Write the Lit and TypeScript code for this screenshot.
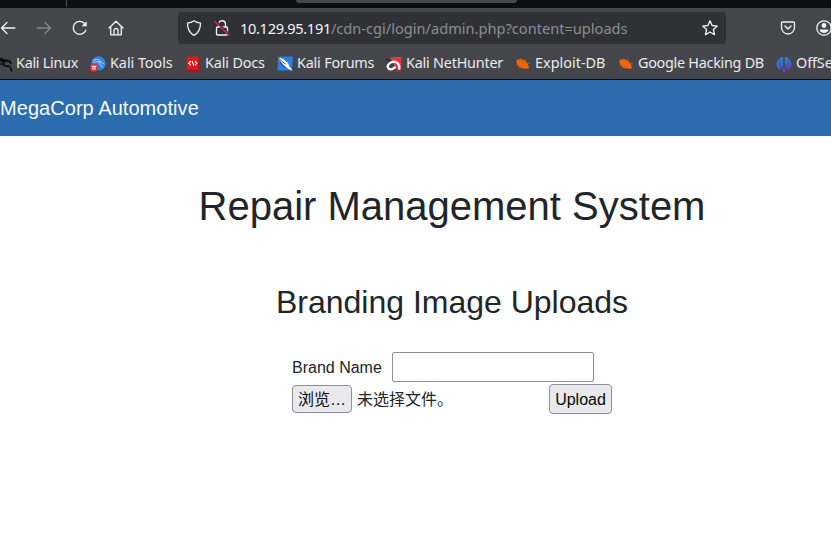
import { LitElement, html, css, svg } from "lit";
import { customElement } from "lit/decorators.js";
import { styleMap } from "lit/directives/style-map.js";

const icon = (body: unknown, size = 16) =>
  html`<svg class="icon" width=${size} height=${size} viewBox="0 0 16 16" fill="none" stroke="currentColor" stroke-width="1.3" stroke-linecap="round" stroke-linejoin="round">${body}</svg>`;

const dragon = svg`<path d="M2 2.500C5 2.500 8 3.500 10 5.500M3 5C5 4.200 7 5 8 6.500M6 4.500C10 3.500 13 4 15 7M8 6.500C7 9.500 9 10.500 12 10C14 10 15 12 15.500 15M4 8L7 8" stroke="#0b0b0e" stroke-width="1.700"/>`;
const tools = svg`<circle cx="8.500" cy="7.500" r="7.200" fill="#347fe8" stroke="none"/><path d="M3 4.500C6 3 9 3 11 5.500M3.500 6.500C6 5 10 5.500 14 8M9 6C9 8.500 11 9.500 13 11" stroke="#b9dcff" stroke-width="1"/><rect x="0" y="7.800" width="8" height="8" rx="3.800" fill="#d93237" stroke="none"/><path d="M2 10.300H6M3 10.500V13.500M5 10.500V13.500" stroke="#fff" stroke-width="1"/>`;
const docs = svg`<path d="M1.800 .5H13L14.500 2V15.500H1.800Z" fill="#e0171e" stroke="none"/><path d="M1.800 14H14.500V15.500H1.800ZM13.500 1V15H14.500V2Z" fill="#961018" stroke="none"/><path d="M5.500 5.500L3.700 7.200L5.500 8.900M10.300 5.500L12.100 7.200L10.300 8.900M7.200 5.200L8.700 9.200" stroke="#fff" stroke-width="1.100"/>`;
const forums = svg`<path d="M3.500 .5H16L15 14.500H.5L1 4Z" fill="#287fe8" stroke="none"/><path d="M.2 .5L6 3L11 7L12.500 10.500L15.800 14.800L11.500 13L8 10.500L4 6Z" fill="#fff" stroke="none"/><path d="M.5 .5L5 5.500L8.500 8M3 5.500L5 9L8.500 11" stroke="#35404d" stroke-width=".9"/>`;
const nethunter = svg`<path d="M4 1H15.700L15 14.500H11Z" fill="#e43446" stroke="none"/><path d="M1 3L4 5M1 7L4 8" stroke="#1f2025" stroke-width="1.200"/><path d="M13.300 12.500C13.800 8 10 4.800 6.500 5.800C3 6.800 1 9.300 2 11.500C3 14 6 13.800 8.800 11.500" stroke="#fff" stroke-width="2.300"/><path d="M1 13.500L3 15.500H13" stroke="#a32738" stroke-width=".8"/>`;
const bug = svg`<path d="M1.500 4.200C4.500 2.800 8 3.200 10.500 5.200C12.700 7 14.300 10.500 13.800 12.500C10.500 13 6 12.600 3.700 10.500C2 9 1.200 6.500 1.500 4.200Z" fill="#ef6507" stroke="none"/><path d="M6 4.500L5.500 2.500M9.500 5L10.500 3M11.500 7.500L14.300 7.500M3.500 9L1.500 9M5.500 11L4 12.500" stroke="#c95612" stroke-width=".8"/>`;
const offsec = svg`<defs><linearGradient id="og" gradientUnits="userSpaceOnUse" x1="2" y1="1" x2="9" y2="15"><stop offset="0" stop-color="#2589bf"/><stop offset=".5" stop-color="#3470d6"/><stop offset="1" stop-color="#6840ce"/></linearGradient></defs><path d="M3.700 2C-.5 5-.5 11 3.700 14ZM4.100 1.500L7.200 .8V9L4.500 14.300ZM8.800 .8L11.900 1.500V14.300L8.800 9ZM12.300 2C16.500 5 16.500 11 12.300 14ZM8 10.500L9.800 15.200L8 15.700L6.200 15.200Z" fill="url(#og)" stroke="none"/>`;

const bookmarks = [
  { label: "Kali Linux", art: dragon, width: 62, tracking: -0.28 },
  { label: "Kali Tools", art: tools, width: 63, tracking: -0.05 },
  { label: "Kali Docs", art: docs, width: 60, tracking: -0.15 },
  { label: "Kali Forums", art: forums, width: 77, tracking: -0.2 },
  { label: "Kali NetHunter", art: nethunter, width: 97, tracking: -0.22 },
  { label: "Exploit-DB", art: bug, width: 71, tracking: 0.02 },
  { label: "Google Hacking DB", art: bug, width: 126, tracking: -0.28 },
  { label: "OffSec", art: offsec, width: 50, tracking: -0.1 },
];

@customElement("browser-chrome")
class BrowserChrome extends LitElement {
  static styles = css`
    :host { display: block; height: 80px; background: #45464b; color: #f4f4f6; font-family: "Noto Sans", sans-serif; overflow: hidden; box-sizing: border-box; border-bottom: 1px solid #08090d; }
    .tabs { height: 8px; background: #0d0e13; display: flex; }
    .divider { width: 66px; height: 7px; border-right: 1px solid #515258; }
    .tab { margin-left: 229px; width: 221px; height: 3px; background: #47484d; border-radius: 0 0 4px 4px; }
    .toolbar { height: 40px; display: flex; align-items: center; }
    .nav { width: 178px; display: flex; gap: 20px; flex: none; }
    .icon { display: block; flex: none; overflow: visible; }
    .dim { color: #85868b; }
    .address { box-sizing: border-box; width: 548px; height: 32px; background: #303136; border-radius: 4px; display: flex; align-items: center; padding: 0 8px; flex: none; }
    .lock { margin-left: 12px; }
    .url { margin-left: 10px; flex: 1; font-size: 14.6px; line-height: 20px; color: #8d8e94; white-space: nowrap; }
    .host { color: #f4f4f6; letter-spacing: -0.33px; }
    .actions { display: flex; gap: 20px; margin-left: 54px; }
    .bookmarks { display: flex; gap: 12px; margin-left: -4px; height: 31px; align-items: center; white-space: nowrap; font-size: 14.4px; line-height: 20px; }
    .bookmark { display: flex; gap: 4px; align-items: center; flex: none; }
    .label { padding-bottom: 1px; color: #ebebee; }
  `;
  render() {
    return html`
      <div class="tabs"><div class="divider"></div><div class="tab"></div></div>
      <div class="toolbar">
        <div class="nav">
          ${icon(svg`<path d="M14.800 8H1.500M7 2.500L1.500 8L7 13.500"/>`)}
          <span class="dim">${icon(svg`<path d="M1.200 8H14.500M9 2.500L14.500 8L9 13.500"/>`)}</span>
          ${icon(svg`<path d="M13.800 10.200A6.500 6.500 0 1 1 12.300 3.200"/><path d="M14.700 1.200V6.300H9.600Z" fill="currentColor" stroke="none"/>`)}
          ${icon(svg`<path d="M1 8L8 1.200L15 8M2.700 7V14.800H13.300V7M6 14.500V10.500C6 7.800 10 7.800 10 10.500V14.500"/>`)}
        </div>
        <div class="address">
          ${icon(svg`<path d="M8 .8C10 2.300 12 3 14.500 3.200C14.500 9 12.500 13 8 15.300C3.500 13 1.500 9 1.500 3.200C4 3 6 2.300 8 .8Z"/>`)}
          <div class="lock">${icon(svg`<rect x="2.500" y="7" width="11" height="8" rx="1"/><path d="M4.500 6.500V4.500C4.500-.5 11.500-.5 11.500 4.500V6.500"/><path d="M2 1.500L15.500 14.500" stroke="#303136" stroke-width="2"/><path d="M.8 1.500L14.800 15" stroke="#d42458" stroke-width="1.500"/>`)}</div>
          <div class="url"><span class="host">10.129.95.191</span>/cdn-cgi/login/admin.php?content=uploads</div>
          ${icon(svg`<path d="M8 .8L10.100 5.500L15.300 6.100L11.400 9.500L12.500 14.700L8 12L3.500 14.700L4.600 9.500L.7 6.100L5.900 5.500Z"/>`)}
        </div>
        <div class="actions">
          ${icon(svg`<path d="M1.500 3Q1.500 2 2.500 2H13.500Q14.500 2 14.500 3V7.500A6.500 6.500 0 0 1 1.500 7.500ZM5 6L8 9L11 6"/>`)}
          ${icon(svg`<circle cx="8" cy="8" r="7.200"/><circle cx="8" cy="5.500" r="2.400" fill="currentColor" stroke="none"/><path d="M3.500 9.500H12.500C12 14 4 14 3.500 9.500Z" fill="currentColor" stroke="none"/>`)}
        </div>
      </div>
      <div class="bookmarks">
        ${bookmarks.map((b) => html`<div class="bookmark">${icon(b.art)}<span class="label" style=${styleMap({ width: `${b.width}px`, letterSpacing: `${b.tracking}px` })}>${b.label}</span></div>`)}
      </div>`;
  }
}

@customElement("app-root")
class AppRoot extends LitElement {
  static styles = css`
    :host { display: block; width: 831px; height: 543px; overflow: hidden; background: #fff; color: #212529; font-family: "Liberation Sans", "Noto Sans CJK SC", sans-serif; }
    .brand { height: 56px; background: #2a6cad; color: #f8fafc; display: flex; align-items: center; font-size: 20px; line-height: 30px; letter-spacing: 0.05px; }
    main { width: 904px; display: flex; flex-direction: column; align-items: center; }
    h1, h2 { font-weight: 400; line-height: 1.2; margin: 0; white-space: nowrap; }
    h1 { font-size: 40px; margin-top: 46px; }
    h2 { font-size: 32px; margin-top: 53px; }
    form { width: 320px; margin-top: 31px; font-size: 16px; line-height: 24px; }
    .row { display: flex; align-items: center; }
    label, .status { padding-top: 2px; }
    .name { box-sizing: border-box; width: 202px; height: 30px; margin: 0 0 0 10px; border: 1px solid #8f8f9d; border-radius: 2px; background: #fff; padding: 1px 2px; font: inherit; }
    .files { height: 30px; margin-top: 2px; }
    button { box-sizing: border-box; border: 1px solid #8f8f9d; border-radius: 4px; background: #e9e9ed; color: #08080a; font: inherit; padding: 2px 0 0; margin: 0; white-space: nowrap; }
    .browse { width: 60px; height: 28px; }
    .status { margin-left: 5px; width: 192px; }
    .upload { width: 63px; height: 30px; }
  `;
  render() {
    return html`
      <browser-chrome></browser-chrome>
      <div class="brand">MegaCorp Automotive</div>
      <main>
        <h1>Repair Management System</h1>
        <h2>Branding Image Uploads</h2>
        <form>
          <div class="row"><label for="name">Brand Name</label><input id="name" class="name" type="text" /></div>
          <div class="row files"><button class="browse" type="button">浏览…</button><span class="status">未选择文件。</span><button class="upload" type="button">Upload</button></div>
        </form>
      </main>`;
  }
}
